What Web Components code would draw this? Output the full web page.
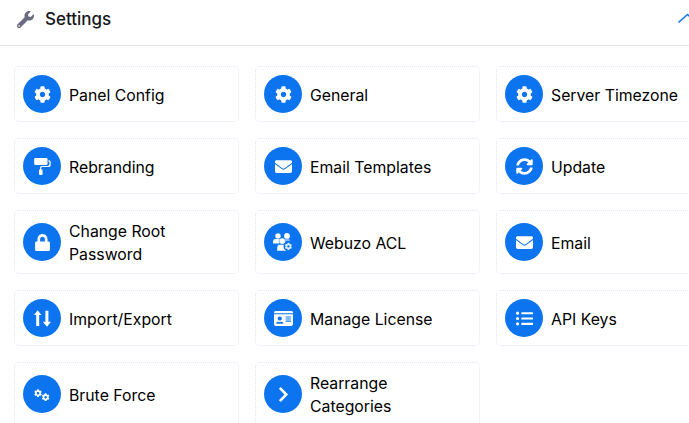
<!DOCTYPE html>
<html>
<head>
<meta charset="utf-8">
<title>Settings</title>
<style>
  html, body { margin: 0; height: 423px; overflow: hidden; background: #fff; }
  body { font-family: Inter, "Open Sans", sans-serif; }
</style>
</head>
<body>
<settings-panel title="Settings">
  <setting-card icon="cog">Panel Config</setting-card>
  <setting-card icon="cog">General</setting-card>
  <setting-card icon="cog">Server Timezone</setting-card>
  <setting-card icon="roller">Rebranding</setting-card>
  <setting-card icon="envelope">Email Templates</setting-card>
  <setting-card icon="sync">Update</setting-card>
  <setting-card icon="lock">Change Root Password</setting-card>
  <setting-card icon="users">Webuzo ACL</setting-card>
  <setting-card icon="envelope">Email</setting-card>
  <setting-card icon="arrows">Import/Export</setting-card>
  <setting-card icon="idcard">Manage License</setting-card>
  <setting-card icon="list">API Keys</setting-card>
  <setting-card icon="cogs">Brute Force</setting-card>
  <setting-card icon="chevron">Rearrange Categories</setting-card>
</settings-panel>

<script>
const COG = "M487.4 315.7l-42.6-24.6c4.3-23.2 4.3-47 0-70.2l42.6-24.6c4.9-2.8 7.1-8.6 5.5-14-11.1-35.6-30-67.8-54.7-94.6-3.8-4.1-10-5.1-14.8-2.3L380.8 110c-17.9-15.4-38.5-27.3-60.8-35.1V25.8c0-5.6-3.9-10.5-9.4-11.7-36.7-8.2-74.3-7.8-109.2 0-5.5 1.2-9.4 6.1-9.4 11.7V75c-22.2 7.9-42.8 19.8-60.8 35.1L88.7 85.5c-4.9-2.8-11-1.9-14.8 2.3-24.7 26.7-43.6 58.9-54.7 94.6-1.7 5.4.6 11.2 5.5 14L67.3 221c-4.3 23.2-4.3 47 0 70.2l-42.6 24.6c-4.9 2.8-7.1 8.6-5.5 14 11.1 35.6 30 67.8 54.7 94.6 3.8 4.1 10 5.1 14.8 2.3l42.6-24.6c17.9 15.4 38.5 27.3 60.8 35.1v49.2c0 5.6 3.9 10.5 9.4 11.7 36.7 8.2 74.3 7.8 109.2 0 5.5-1.2 9.4-6.1 9.4-11.7v-49.2c22.2-7.9 42.8-19.8 60.8-35.1l42.6 24.6c4.9 2.8 11 1.9 14.8-2.3 24.7-26.7 43.6-58.9 54.7-94.6 1.5-5.5-.7-11.3-5.6-14.1zM256 336c-44.1 0-80-35.9-80-80s35.9-80 80-80 80 35.9 80 80-35.9 80-80 80z";

// width, height, viewBox, markup
const ICONS = {
  cog: [17, 17, "0 0 512 512", `<path d="${COG}"/>`],
  roller: [17, 17, "0 0 17 17", `<path d="M1.5 0H12.2Q13.5 0 13.5 1.3V5.7Q13.5 7 12.2 7H1.5Q.2 7 .2 5.7V1.3Q.2 0 1.5 0Z"/><path d="M14.4 2.2H15Q16.7 2.2 16.7 4V6.4Q16.7 9 14 9H8.2Q7.2 9 7.2 10V11.3Q8.6 11.4 8.6 12.6V15.8Q8.6 17 7.4 17H6.2Q5 17 5 15.8V12.6Q5 11.4 6 11.3V9.6Q6 7.9 7.8 7.9H13.6Q15.4 7.9 15.4 6V4.4Q15.4 3.6 14.4 3.6Z"/>`],
  envelope: [17, 17, "0 0 512 512", `<path d="M502.3 190.8c3.9-3.1 9.7-.2 9.7 4.7V400c0 26.5-21.5 48-48 48H48c-26.5 0-48-21.5-48-48V195.6c0-5 5.7-7.8 9.7-4.7 22.4 17.4 52.1 39.5 154.1 113.6 21.1 15.4 56.7 47.8 92.2 47.6 35.7.3 72-32.8 92.3-47.6 102-74.1 131.6-96.3 154-113.7zM256 320c23.2.4 56.6-29.2 73.4-41.4 132.7-96.3 142.8-104.7 173.4-128.7 5.8-4.5 9.2-11.5 9.2-18.9v-19c0-26.5-21.5-48-48-48H48C21.5 64 0 85.5 0 112v19c0 7.4 3.4 14.3 9.2 18.9 30.6 23.9 40.7 32.4 173.4 128.7 16.8 12.2 50.2 41.8 73.4 41.4z"/>`],
  sync: [17, 17, "0 0 512 512", `<path d="M370.72 133.28C339.458 104.008 298.888 87.962 255.848 88c-77.458.068-144.328 53.178-162.791 126.85-1.344 5.363-6.122 9.15-11.651 9.15H24.103c-7.498 0-13.194-6.807-11.807-14.176C33.933 94.924 134.813 8 256 8c66.448 0 126.791 26.136 171.315 68.685L463.03 40.97C478.149 25.851 504 36.559 504 57.941V192c0 13.255-10.745 24-24 24H345.941c-21.382 0-32.09-25.851-16.971-40.971l41.75-41.749zM32 296h134.059c21.382 0 32.09 25.851 16.971 40.971l-41.75 41.75c31.262 29.273 71.835 45.319 114.876 45.28 77.418-.07 144.315-53.144 162.787-126.849 1.344-5.363 6.122-9.15 11.651-9.15h57.304c7.498 0 13.194 6.807 11.807 14.176C478.067 417.076 377.187 504 256 504c-66.448 0-126.791-26.136-171.315-68.685L48.97 471.03C33.851 486.149 8 475.441 8 454.059V320c0-13.255 10.745-24 24-24z"/>`],
  lock: [15, 17, "0 0 448 512", `<path d="M400 224h-24v-72C376 68.2 307.8 0 224 0S72 68.2 72 152v72H48c-26.5 0-48 21.5-48 48v192c0 26.5 21.5 48 48 48h352c26.5 0 48-21.5 48-48V272c0-26.5-21.5-48-48-48zm-104 0H152v-72c0-39.7 32.3-72 72-72s72 32.3 72 72v72z"/>`],
  users: [20, 18, "0 0 20 18", `<circle cx="5" cy="2.9" r="2.7"/><circle cx="14" cy="2.9" r="2.9"/><path d="M0 10.6V8.4Q0 6 2.5 6H7.5Q9 6 9 7.2L6 10.6Z"/><path d="M10 6.6H15.5Q17 6.6 17 7.6H12.5L12.3 9Z"/><path d="M4 18V14.4Q4 11.4 7 11.4H11.8Q14 11.4 14 13.6V18Z" stroke="#0b74ee" stroke-width=".5"/><circle cx="9.3" cy="8.1" r="3.2" stroke="#0b74ee" stroke-width=".5"/><circle cx="15.4" cy="13.4" r="4.9" fill="#0b74ee"/><path fill="#e3eefc" transform="translate(11.7 9.7) scale(.0145)" d="${COG}"/>`],
  arrows: [17, 17, "0 0 17 17", `<path d="M3.7 .2 7.4 5H5.2V16H2.2V5H0Z"/><path d="M13 16.8 8.8 11.8H11.4V.8H14.4V11.8H17Z"/>`],
  idcard: [19, 17, "0 0 576 512", `<path d="M528 32H48C21.5 32 0 53.5 0 80v16h576V80c0-26.5-21.5-48-48-48zM0 432c0 26.5 21.5 48 48 48h480c26.5 0 48-21.5 48-48V128H0v304zm352-232c0-4.4 3.6-8 8-8h144c4.4 0 8 3.6 8 8v16c0 4.4-3.6 8-8 8H360c-4.4 0-8-3.6-8-8v-16zm0 64c0-4.4 3.6-8 8-8h144c4.4 0 8 3.6 8 8v16c0 4.4-3.6 8-8 8H360c-4.4 0-8-3.6-8-8v-16zm0 64c0-4.4 3.6-8 8-8h144c4.4 0 8 3.6 8 8v16c0 4.4-3.6 8-8 8H360c-4.4 0-8-3.6-8-8v-16zM176 192c35.3 0 64 28.7 64 64s-28.7 64-64 64-64-28.7-64-64 28.7-64 64-64zM67.1 396.2C75.5 370.5 99.6 352 128 352h8.2c12.3 5.1 25.7 8 39.8 8s27.6-2.9 39.8-8h8.2c28.4 0 52.5 18.5 60.9 44.2 3.2 9.9-5.2 19.8-15.6 19.8H82.7c-10.4 0-18.8-10-15.6-19.8z"/>`],
  list: [17, 17, "0 0 512 512", `<path d="M48 48a48 48 0 1 0 48 48 48 48 0 0 0-48-48zm0 160a48 48 0 1 0 48 48 48 48 0 0 0-48-48zm0 160a48 48 0 1 0 48 48 48 48 0 0 0-48-48zm448 16H176a16 16 0 0 0-16 16v32a16 16 0 0 0 16 16h320a16 16 0 0 0 16-16v-32a16 16 0 0 0-16-16zm0-320H176a16 16 0 0 0-16 16v32a16 16 0 0 0 16 16h320a16 16 0 0 0 16-16V80a16 16 0 0 0-16-16zm0 160H176a16 16 0 0 0-16 16v32a16 16 0 0 0 16 16h320a16 16 0 0 0 16-16v-32a16 16 0 0 0-16-16z"/>`],
  cogs: [16, 17, "0 0 16 17", `<path transform="translate(0 3.2) scale(.0156)" d="${COG}"/><path transform="translate(7.6 7.2) scale(.0156)" d="${COG}"/>`],
  chevron: [11, 17, "0 0 320 512", `<path d="M285.476 272.971L91.132 467.314c-9.373 9.373-24.569 9.373-33.941 0l-22.667-22.667c-9.357-9.357-9.375-24.522-.04-33.901L188.505 256 34.484 101.255c-9.335-9.379-9.317-24.544.04-33.901l22.667-22.667c9.373-9.373 24.569-9.373 33.941 0L285.475 239.03c9.373 9.372 9.373 24.568.001 33.941z"/>`]
};

class SettingCard extends HTMLElement {
  constructor() {
    super();
    const [w, h, box, body] = ICONS[this.getAttribute("icon")] || ICONS.cog;
    this.attachShadow({ mode: "open" }).innerHTML = `
      <style>
        :host {
          display: flex;
          align-items: center;
          gap: 8px;
          box-sizing: border-box;
          min-height: 56px;
          padding: 8px;
          border: 1px dotted #e4e4f9;
          border-radius: 5px;
          background: #fff;
        }
        .dot {
          flex: none;
          display: flex;
          align-items: center;
          justify-content: center;
          width: 38px;
          height: 38px;
          border-radius: 50%;
          background: #0b74ee;
        }
        svg { fill: #fff; display: block; }
        .label {
          font-size: 15.8px;
          font-weight: 440;
          line-height: 23px;
          margin: 1px 0 -1px;
          color: #000;
          width: 150px;
        }
      </style>
      <span class="dot"><svg width="${w}" height="${h}" viewBox="${box}">${body}</svg></span>
      <span class="label"><slot></slot></span>`;
  }
}

class SettingsPanel extends HTMLElement {
  constructor() {
    super();
    const title = this.getAttribute("title");
    this.attachShadow({ mode: "open" }).innerHTML = `
      <style>
        :host { display: block; width: 735px; }
        header {
          display: flex;
          align-items: center;
          box-sizing: border-box;
          height: 46px;
          padding: 0 37px 7px 17px;
          border-bottom: 1px solid #e4e4e7;
          gap: 11px;
        }
        h1 {
          margin: 0;
          font-size: 17px;
          font-weight: 550;
          line-height: 24px;
          color: #16181b;
        }
        .wrench { fill: #6c6a80; display: block; }
        .toggle { margin-left: auto; fill: none; stroke: #1f78ea; stroke-width: 1.6; display: block; }
        .grid {
          display: grid;
          grid-template-columns: repeat(3, 225px);
          gap: 16px;
          padding: 20px 14px;
        }
      </style>
      <header>
        <svg class="wrench" width="17" height="17" viewBox="0 0 512 512"><path d="M507.73 109.1c-2.24-9.03-13.54-12.09-20.12-5.51l-74.36 74.36-67.88-11.31-11.31-67.88 74.36-74.36c6.62-6.62 3.43-17.9-5.66-20.16-47.38-11.74-99.55.91-136.58 37.93-39.64 39.64-50.55 97.1-34.05 147.2L18.74 402.76c-24.99 24.99-24.99 65.51 0 90.5 24.99 24.99 65.51 24.99 90.5 0l213.21-213.21c50.12 16.71 107.47 5.68 147.37-34.22 37.07-37.07 49.7-89.32 37.91-136.73zM64 472c-13.25 0-24-10.75-24-24 0-13.26 10.75-24 24-24s24 10.74 24 24c0 13.25-10.75 24-24 24z"/></svg>
        <h1>${title}</h1>
        <svg class="toggle" width="20" height="12" viewBox="0 0 20 12"><path d="M0.5 9.5 9.5 1.5 18.5 9.5"/></svg>
      </header>
      <div class="grid"><slot></slot></div>`;
  }
}

customElements.define("setting-card", SettingCard);
customElements.define("settings-panel", SettingsPanel);
</script>
</body>
</html>
